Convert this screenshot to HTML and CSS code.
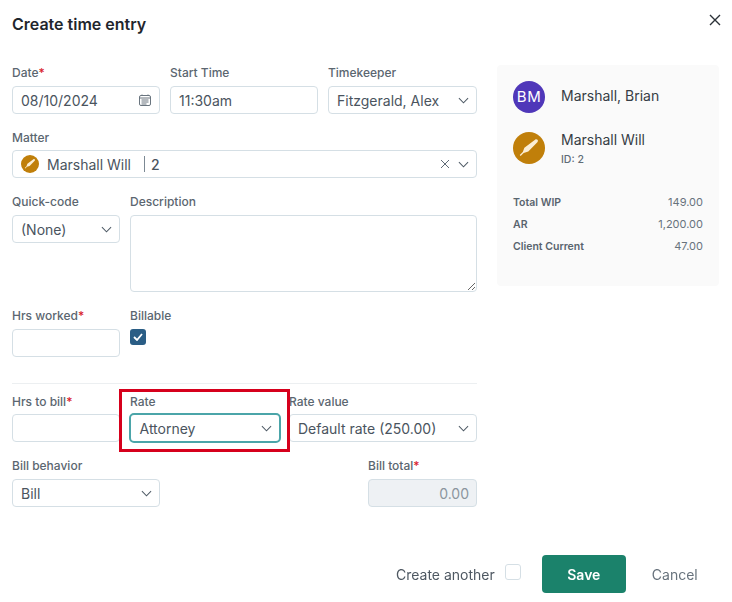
FILE: index.html
```html
<!DOCTYPE html>
<html lang="en">
<head>
<meta charset="utf-8">
<title>Create time entry</title>
<link rel="stylesheet" href="styles.css">
</head>
<body>
<div class="modal">
  <header class="head">
    <h1>Create time entry</h1>
    <svg class="close" width="12" height="12" viewBox="0 0 12 12"><path d="M1 1l10 10M11 1L1 11" stroke="#2b3138" stroke-width="1.4" fill="none"/></svg>
  </header>
  <div class="main">
    <form class="form">
      <div class="row r-three">
        <div class="cell">
          <div class="lbl">Date<span class="req">*</span></div>
          <div class="field"><span>08/10/2024</span>
            <svg width="14" height="14" viewBox="0 0 14 14" fill="none" stroke="#6a757f" stroke-width="1"><rect x="1.5" y="2.5" width="11" height="10" rx="1.5"/><path d="M1.5 5h11M4 1.5v1M10 1.5v1M3.5 7h7M3.5 9h7M3.5 11h5"/></svg>
          </div>
        </div>
        <div class="cell">
          <div class="lbl">Start Time</div>
          <div class="field"><span>11:30am</span></div>
        </div>
        <div class="cell">
          <div class="lbl">Timekeeper</div>
          <div class="field"><span>Fitzgerald, Alex</span>
            <svg class="chev" width="11" height="7" viewBox="0 0 12 7"><path d="M1 1l5 5 5-5" fill="none" stroke="#4e5a65" stroke-width="1.1"/></svg>
          </div>
        </div>
      </div>
      <div class="row">
        <div class="cell">
          <div class="lbl">Matter</div>
          <div class="field matter">
            <svg class="pen-badge" width="18" height="18" viewBox="0 0 18 18"><circle cx="9" cy="9" r="9" fill="#c07f0a"/><path d="M12.400 4.300c.5-.4 1.100-.3 1.400.1s.3.9-.1 1.300l-5.100 5.200-2.600.9-1.700 1.700-.5-.5 1.700-1.700.9-2.500z" fill="#fbeed5"/></svg>
            <span class="m-name">Marshall Will</span>
            <span class="m-sep"></span>
            <span class="m-id">2</span>
            <svg class="clear" width="10" height="10" viewBox="0 0 10 10"><path d="M1 1l8 8M9 1L1 9" stroke="#5f6b76" stroke-width="1" fill="none"/></svg>
            <svg class="chev" width="11" height="7" viewBox="0 0 12 7"><path d="M1 1l5 5 5-5" fill="none" stroke="#4e5a65" stroke-width="1.1"/></svg>
          </div>
        </div>
      </div>
      <div class="row r-narrow">
        <div class="cell">
          <div class="lbl">Quick-code</div>
          <div class="field"><span>(None)</span>
            <svg class="chev" width="11" height="7" viewBox="0 0 12 7"><path d="M1 1l5 5 5-5" fill="none" stroke="#4e5a65" stroke-width="1.1"/></svg>
          </div>
        </div>
        <div class="cell">
          <div class="lbl">Description</div>
          <textarea class="area"></textarea>
        </div>
      </div>
      <div class="row r-narrow">
        <div class="cell">
          <div class="lbl">Hrs worked<span class="req">*</span></div>
          <div class="field"></div>
        </div>
        <div class="cell">
          <div class="lbl">Billable</div>
          <div class="check"><svg width="10" height="8" viewBox="0 0 10 8"><path d="M1 4l3 3 5-6" fill="none" stroke="#fff" stroke-width="1.8"/></svg></div>
        </div>
      </div>
      <hr class="rule">
      <div class="row r-rate">
        <div class="cell">
          <div class="lbl">Hrs to bill<span class="req">*</span></div>
          <div class="field"></div>
        </div>
        <div class="cell rate-cell">
          <div class="lbl">Rate</div>
          <div class="field focus"><span>Attorney</span>
            <svg class="chev" width="11" height="7" viewBox="0 0 12 7"><path d="M1 1l5 5 5-5" fill="none" stroke="#4e5a65" stroke-width="1.1"/></svg>
          </div>
          <div class="marker"></div>
        </div>
        <div class="cell">
          <div class="lbl">Rate value</div>
          <div class="field"><span>Default rate (250.00)</span>
            <svg class="chev" width="11" height="7" viewBox="0 0 12 7"><path d="M1 1l5 5 5-5" fill="none" stroke="#4e5a65" stroke-width="1.1"/></svg>
          </div>
        </div>
      </div>
      <div class="row r-bill">
        <div class="cell">
          <div class="lbl">Bill behavior</div>
          <div class="field"><span>Bill</span>
            <svg class="chev" width="11" height="7" viewBox="0 0 12 7"><path d="M1 1l5 5 5-5" fill="none" stroke="#4e5a65" stroke-width="1.1"/></svg>
          </div>
        </div>
        <div class="cell">
          <div class="lbl">Bill total<span class="req">*</span></div>
          <div class="field disabled"><span>0.00</span></div>
        </div>
      </div>
    </form>
    <aside class="side">
      <div class="person">
        <div class="avatar">BM</div>
        <div class="p-name p-first">Marshall, Brian</div>
      </div>
      <div class="person p-matter">
        <svg width="32" height="32" viewBox="0 0 18 18"><circle cx="9" cy="9" r="9" fill="#c07f0a"/><path d="M12.400 4.300c.5-.4 1.100-.3 1.400.1s.3.9-.1 1.300l-5.100 5.200-2.600.9-1.700 1.700-.5-.5 1.700-1.700.9-2.500z" fill="#fbeed5"/></svg>
        <div class="p-block">
          <div class="p-name">Marshall Will</div>
          <div class="p-id">ID: 2</div>
        </div>
      </div>
      <dl class="stats">
        <div><dt>Total WIP</dt><dd>149.00</dd></div>
        <div><dt>AR</dt><dd>1,200.00</dd></div>
        <div><dt>Client Current</dt><dd>47.00</dd></div>
      </dl>
    </aside>
  </div>
  <footer class="foot">
    <span class="another">Create another</span>
    <span class="box"></span>
    <button class="save" type="button">Save</button>
    <button class="cancel" type="button">Cancel</button>
  </footer>
</div>
</body>
</html>
```

FILE: styles.css
```css
* { box-sizing: border-box; }
html, body { margin: 0; padding: 0; background: #fff; }
body { font-family: Inter, "Liberation Sans", sans-serif; color: #2b3138; width: 732px; height: 602px; overflow: hidden; }
.modal { padding: 0 13px 0 12px; }
.head { display: flex; justify-content: space-between; align-items: flex-start; height: 65px; padding-top: 15px; }
.head h1 { margin: 0; font-size: 16px; line-height: 18px; font-weight: 600; color: #1f262d; }
.close { margin: -1px -2px 0 0; }
.main { display: flex; gap: 20px; align-items: flex-start; }
.form { width: 465px; }
.row { display: grid; column-gap: 10px; margin-bottom: 16px; }
.r-three { grid-template-columns: 148px 148px 149px; }
.r-narrow { grid-template-columns: 108px 347px; }
.r-rate { grid-template-columns: 108px 149px 188px; }
.r-rate .lbl { margin-bottom: 5px; }
.r-bill { grid-template-columns: 148px 109px; justify-content: space-between; margin-bottom: 0; }
.cell { min-width: 0; }
.lbl { font-size: 12px; line-height: 15px; font-weight: 500; color: #5b6670; margin-bottom: 6px; height: 15px; }
.req { color: #d9232e; }
.field { display: flex; align-items: center; justify-content: space-between; height: 28px; padding: 0 7px 0 8px; border: 1px solid #d5dfe5; border-radius: 4px; font-size: 14px; color: #4a545e; background: #fff; }
.matter { justify-content: flex-start; margin-top: -1px; }
.pen-badge { flex: none; margin-right: 8px; }
.m-name { width: 97px; }
.m-sep { width: 1px; height: 16px; background: #7c8994; margin-right: 6px; }
.m-id { font-weight: 500; color: #4a545e; }
.clear { margin-left: auto; margin-right: 8px; }
.area { display: block; width: 100%; height: 77px; border: 1px solid #d5dfe5; border-radius: 4px; background: #fff; margin: 0; padding: 6px 8px; font: inherit; outline: none; resize: both; }
.check { width: 16px; height: 16px; border-radius: 3px; background: #2a5d85; display: flex; align-items: center; justify-content: center; }
.rule { border: 0; border-top: 1px solid #eceff1; margin: 26px 0 10px; }
.rate-cell { position: relative; }
.focus { border: 2px solid #4ba5a9; height: 30px; margin: -1px 0 -1px -1px; padding-left: 8.500px; border-radius: 5px; width: 152px; }
.marker { position: absolute; left: -11px; top: -5px; width: 171px; height: 63px; border: 3px solid #d6001c; pointer-events: none; }
.disabled { background: #eef1f4; justify-content: flex-end; color: #8b959e; }
.side { width: 222px; height: 221px; background: #fafafa; border-radius: 4px; padding: 16px 16px 0; }
.person { display: flex; align-items: center; gap: 16px; }
.p-first { margin-top: -2px; }
.p-block { margin-top: -2px; }
.p-matter { margin-top: 19px; align-items: flex-start; }
.avatar { width: 32px; height: 32px; border-radius: 50%; background: #4f37b9; color: #fff; font-size: 15px; line-height: 32px; text-align: center; letter-spacing: 0.5px; }
.p-name { font-size: 14px; line-height: 20px; color: #363d45; }
.p-id { font-size: 10.500px; line-height: 14px; margin-top: 3px; color: #5f6b76; font-weight: 500; }
.stats { margin: 24px 0 0; }
.stats div { display: flex; justify-content: space-between; height: 22px; align-items: center; }
.stats dt { font-size: 10.500px; font-weight: 600; color: #59646e; }
.stats dd { margin: 0; font-size: 11px; color: #68737d; }
.foot { display: flex; align-items: center; position: fixed; left: 396px; top: 555px; height: 38px; }
.another { font-size: 14px; color: #4e5862; }
.box { width: 16px; height: 16px; margin: -4px 0 0 10px; border: 1px solid #d5dfe5; border-radius: 3px; }
.save { width: 84px; height: 38px; margin-left: 21px; border: 0; border-radius: 4px; background: #1b826b; color: #fff; font: 600 14px Inter, sans-serif; }
.cancel { margin-left: 26px; padding: 0; border: 0; background: none; font: 14px Inter, sans-serif; color: #68737d; }
```
